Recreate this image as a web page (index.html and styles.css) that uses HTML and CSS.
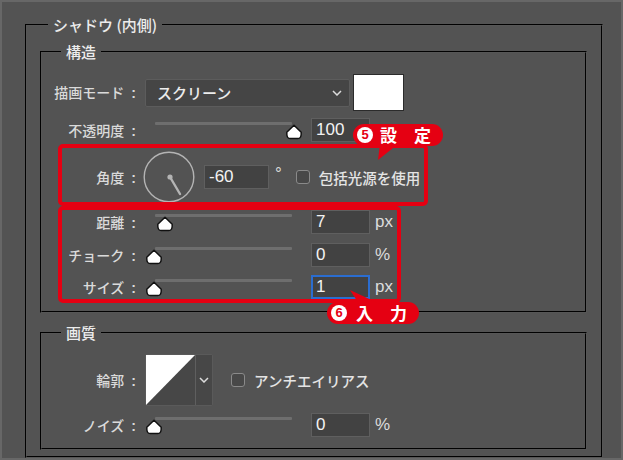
FILE: index.html
```html
<!DOCTYPE html>
<html lang="ja">
<head>
<meta charset="utf-8">
<title>シャドウ (内側)</title>
<link rel="stylesheet" href="styles.css">
</head>
<body>
<div class="frame">
  <fieldset class="group outer">
    <legend class="title">シャドウ (内側)</legend>

    <fieldset class="group inner">
      <legend class="subtitle">構造</legend>

      <div class="row r-mode">
        <div class="label">描画モード<span class="c">:</span></div>
        <div class="ctrl">
          <div class="select"><span>スクリーン</span>
            <svg class="chev" width="10" height="6" viewBox="0 0 10 6"><polyline points="1,1 5,5 9,1" fill="none" stroke="#dcdcdc" stroke-width="1.5"/></svg>
          </div>
          <div class="swatch"></div>
        </div>
      </div>

      <div class="row r-24 r-op">
        <div class="label">不透明度<span class="c">:</span></div>
        <div class="ctrl">
          <div class="slider"><div class="track"></div>
            <svg class="thumb" style="margin-left:140px" width="18" height="16" viewBox="0 0 18 16"><path d="M9 1.2 L16.2 8.2 Q16.6 14.6 12.8 14.6 L5.2 14.6 Q1.4 14.6 1.8 8.2 Z" fill="#fff" stroke="#111" stroke-width="1.5" stroke-linejoin="round"/></svg>
          </div>
          <div class="num">100</div>
        </div>
      </div>

      <div class="row r-angle">
        <div class="label">角度<span class="c">:</span></div>
        <div class="ctrl">
          <svg class="dial" width="52" height="52" viewBox="0 0 52 52"><circle cx="26" cy="26" r="24.8" fill="none" stroke="#b4b4b4" stroke-width="1.4"/><circle cx="27" cy="26" r="2.6" fill="#b4b4b4"/><line x1="27" y1="26" x2="37" y2="43" stroke="#b4b4b4" stroke-width="2.4" stroke-linecap="round"/></svg>
          <div class="num wide">-60</div>
          <span class="deg">°</span>
          <span class="check"></span>
          <span class="ctext">包括光源を使用</span>
        </div>
      </div>

      <div class="row r-24 r-dist">
        <div class="label">距離<span class="c">:</span></div>
        <div class="ctrl">
          <div class="slider"><div class="track"></div>
            <svg class="thumb" style="margin-left:11px" width="18" height="16" viewBox="0 0 18 16"><path d="M9 1.2 L16.2 8.2 Q16.6 14.6 12.8 14.6 L5.2 14.6 Q1.4 14.6 1.8 8.2 Z" fill="#fff" stroke="#111" stroke-width="1.5" stroke-linejoin="round"/></svg>
          </div>
          <div class="num">7</div><span class="unit">px</span>
        </div>
      </div>

      <div class="row r-24 r-choke">
        <div class="label">チョーク<span class="c">:</span></div>
        <div class="ctrl">
          <div class="slider"><div class="track"></div>
            <svg class="thumb" style="margin-left:0px" width="18" height="16" viewBox="0 0 18 16"><path d="M9 1.2 L16.2 8.2 Q16.6 14.6 12.8 14.6 L5.2 14.6 Q1.4 14.6 1.8 8.2 Z" fill="#fff" stroke="#111" stroke-width="1.5" stroke-linejoin="round"/></svg>
          </div>
          <div class="num">0</div><span class="unit">%</span>
        </div>
      </div>

      <div class="row r-24 r-size">
        <div class="label">サイズ<span class="c">:</span></div>
        <div class="ctrl">
          <div class="slider"><div class="track"></div>
            <svg class="thumb" style="margin-left:0px" width="18" height="16" viewBox="0 0 18 16"><path d="M9 1.2 L16.2 8.2 Q16.6 14.6 12.8 14.6 L5.2 14.6 Q1.4 14.6 1.8 8.2 Z" fill="#fff" stroke="#111" stroke-width="1.5" stroke-linejoin="round"/></svg>
          </div>
          <div class="num focus">1</div><span class="unit">px</span>
        </div>
      </div>
    </fieldset>

    <fieldset class="group inner quality">
      <legend class="subtitle">画質</legend>

      <div class="row r-contour">
        <div class="label">輪郭<span class="c">:</span></div>
        <div class="ctrl">
          <div class="contour">
            <svg class="preview" width="49" height="50" viewBox="0 0 49 50"><rect width="49" height="50" fill="#474747"/><polygon points="0,0 49,0 0,50" fill="#fff"/></svg>
            <div class="cdrop"><svg width="10" height="6" viewBox="0 0 10 6"><polyline points="1,1 5,5 9,1" fill="none" stroke="#dcdcdc" stroke-width="1.5"/></svg></div>
          </div>
          <span class="check aa"></span>
          <span class="ctext">アンチエイリアス</span>
        </div>
      </div>

      <div class="row r-24 r-noise">
        <div class="label">ノイズ<span class="c">:</span></div>
        <div class="ctrl">
          <div class="slider"><div class="track"></div>
            <svg class="thumb" style="margin-left:0px" width="18" height="16" viewBox="0 0 18 16"><path d="M9 1.2 L16.2 8.2 Q16.6 14.6 12.8 14.6 L5.2 14.6 Q1.4 14.6 1.8 8.2 Z" fill="#fff" stroke="#111" stroke-width="1.5" stroke-linejoin="round"/></svg>
          </div>
          <div class="num">0</div><span class="unit">%</span>
        </div>
      </div>
    </fieldset>
  </fieldset>

  <div class="mark box1"></div>
  <div class="mark box2"></div>
  <div class="callout c5">
    <span class="badge">5</span><span class="ctxt">設　定</span>
    <svg class="ptr" width="26" height="18" viewBox="0 0 26 18"><polygon points="5,0 23,0 3,16" fill="#e50012"/></svg>
  </div>
  <div class="callout c6">
    <span class="badge">6</span><span class="ctxt">入　力</span>
    <svg class="ptr" width="36" height="16" viewBox="0 0 36 16"><polygon points="3,1 12,15 33,15" fill="#e50012"/></svg>
  </div>
</div>
</body>
</html>
```

FILE: styles.css
```css
html, body {
  margin: 0;
  padding: 0;
  background: #535353;
}

.frame {
  position: relative;
  width: 623px;
  height: 460px;
  box-sizing: border-box;
  border: 2px solid #676767;
  background: #535353;
  padding: 14px 19px 0 23px;
  font-family: "Noto Sans CJK JP", "Noto Sans", sans-serif;
  color: #d6d6d6;
  overflow: hidden;
}

.group {
  margin: 0;
  border-width: 2px;
  border-style: groove;
  border-color: #565656;
  min-width: 0;
}

.outer {
  width: 578px;
  box-sizing: border-box;
  padding: 9px 14px 6px 13px;
}

.inner {
  padding: 13px 0 12px 0;
}

.quality {
  margin-top: 11px;
  padding: 12px 0 11px 0;
}

.title,
.subtitle {
  font-size: 15px;
  line-height: 18px;
  padding: 0 5px;
  color: #ececec;
  font-weight: 500;
}

.title { margin-left: 8px; }
.subtitle { margin-left: 19px; }

.row {
  display: grid;
  grid-template-columns: 96px auto;
  column-gap: 7px;
  align-items: center;
}

.label {
  text-align: right;
  padding-right: 2px;
  font-size: 14px;
  line-height: 20px;
  color: #dadada;
  font-weight: 500;
  white-space: nowrap;
}

.label .c {
  font-family: "Liberation Sans", sans-serif;
  font-weight: bold;
  margin-left: 7px;
}

.ctrl {
  display: flex;
  align-items: center;
  height: 100%;
}

.r-mode { height: 37px; }
.r-24 { height: 24px; }
.r-op { margin-top: 7px; }
.r-angle { height: 52px; margin-top: 9px; }
.r-dist { margin-top: 7px; }
.r-choke { margin-top: 9px; }
.r-size { margin-top: 8px; }
.r-contour { height: 52px; }
.r-noise { margin-top: 7px; }

.select {
  width: 205px;
  height: 28px;
  box-sizing: border-box;
  background: #454545;
  border: 1px solid #5c5c5c;
  border-radius: 2px;
  display: flex;
  align-items: center;
  justify-content: space-between;
  padding: 0 7px 0 11px;
  font-size: 15px;
  font-weight: 500;
  color: #ececec;
}

.swatch {
  width: 51px;
  height: 37px;
  box-sizing: border-box;
  margin-left: 3px;
  background: #ffffff;
  border: 1px solid #2b2b2b;
}

.slider {
  width: 155px;
  height: 24px;
  display: flex;
  flex-direction: column;
  align-self: flex-start;
}

.track {
  margin: 4px 0 0 10px;
  width: 137px;
  height: 3px;
  background: #6e6e6e;
  border-radius: 1px;
}

.thumb {
  display: block;
  margin-top: -1px;
  margin-left: -2px;
}

.num {
  width: 59px;
  height: 24px;
  box-sizing: border-box;
  margin-left: 11px;
  background: #424242;
  border: 1px solid #5f5f5f;
  font-family: "Liberation Sans", Arial, sans-serif;
  font-size: 17px;
  line-height: 22px;
  padding-left: 4px;
  color: #f2f2f2;
}

.num.wide {
  width: 65px;
  margin-left: 9px;
}

.num.focus {
  border: 2px solid #2b6dd0;
  padding-left: 3px;
  line-height: 20px;
}

.unit {
  margin-left: 5px;
  font-family: "Liberation Sans", Arial, sans-serif;
  font-size: 17px;
  color: #dcdcdc;
}

.dial {
  display: block;
  margin-left: -2px;
}

.deg {
  margin-left: 6px;
  font-family: "Liberation Sans", Arial, sans-serif;
  font-size: 17px;
  color: #dcdcdc;
  align-self: flex-start;
  margin-top: 13px;
}

.check {
  width: 14px;
  height: 14px;
  box-sizing: border-box;
  margin-left: 14px;
  border: 1.5px solid #8a8a8a;
  border-radius: 3px;
  background: #484848;
}

.check.aa {
  margin-left: 18px;
}

.ctext {
  margin-left: 9px;
  font-size: 14.5px;
  font-weight: 500;
  color: #e4e4e4;
  white-space: nowrap;
}

.contour {
  display: flex;
  height: 52px;
  box-sizing: border-box;
  border: 1px solid #5a5a5a;
  border-radius: 2px;
}

.preview {
  display: block;
  margin: 0;
}

.cdrop {
  width: 17px;
  box-sizing: border-box;
  border-left: 1px solid #5f5f5f;
  background: #474747;
  display: flex;
  align-items: center;
  justify-content: center;
}

/* annotation overlays */
.mark {
  position: absolute;
  box-sizing: border-box;
  border: 4px solid #e50012;
  border-radius: 5px;
}

.box1 { left: 56px; top: 142px; width: 370px; height: 62px; }
.box2 { left: 56px; top: 204px; width: 343px; height: 97px; }

.callout {
  position: absolute;
  height: 22px;
  box-sizing: border-box;
  background: #e50012;
  border-radius: 11px;
  display: flex;
  align-items: center;
  padding-left: 4px;
  color: #ffffff;
}

.c5 { left: 351px; top: 122px; width: 90px; }
.c6 { left: 325px; top: 300px; width: 92px; }

.badge {
  width: 16px;
  height: 16px;
  border-radius: 50%;
  background: #ffffff;
  color: #e50012;
  font-family: "Liberation Sans", Arial, sans-serif;
  font-weight: bold;
  font-size: 13px;
  line-height: 16px;
  text-align: center;
}

.ctxt {
  margin-left: 7px;
  font-size: 17px;
  font-weight: bold;
  line-height: 22px;
  white-space: nowrap;
}

.c6 .ctxt { margin-left: 9px; }

.ptr {
  position: absolute;
}

.c5 .ptr { left: 22px; top: 20px; }
.c6 .ptr { left: 20px; top: -13px; }
```
